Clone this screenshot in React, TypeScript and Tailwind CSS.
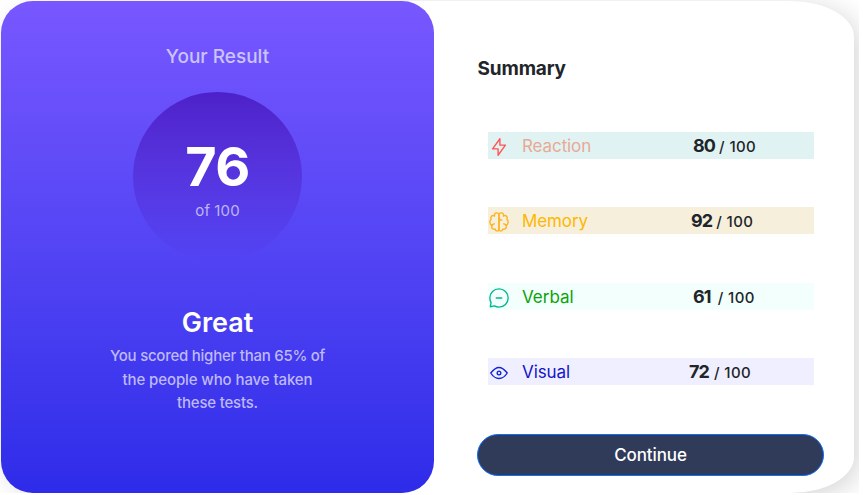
import React from 'react';

const stroke = {
  fill: 'none',
  strokeWidth: 1.25,
  strokeLinecap: 'round' as const,
  strokeLinejoin: 'round' as const,
};

const rows = [
  {
    label: 'Reaction',
    score: 80,
    bar: 'bg-[#e0f3f2] mb-[48px]',
    text: 'text-[#e9a995] tracking-[-0.1px]',
    inset: 'left-[205px]',
    gap: 'ml-[4px]',
    color: '#ff5555',
    paths: ['M10.833 8.333V2.5l-6.666 9.167h5V17.5l6.666-9.167h-5Z'],
  },
  {
    label: 'Memory',
    score: 92,
    bar: 'bg-[#f5efdc] mb-[49px]',
    text: 'text-[#ffb700] tracking-[-0.1px]',
    inset: 'left-[203px]',
    gap: 'ml-[4px]',
    color: '#ffb21e',
    paths: [
      'M5.833 11.667a2.5 2.5 0 1 0 .834 4.858',
      'M3.553 13.004a3.333 3.333 0 0 1-.728-5.53m.025-.067a2.083 2.083 0 0 1 2.983-2.824m.199.054A2.083 2.083 0 1 1 10 3.75v12.917a1.667 1.667 0 0 1-3.333 0M10 5.833a2.5 2.5 0 0 0 2.5 2.5m1.667 3.334a2.5 2.5 0 1 1-.834 4.858',
      'M16.447 13.004a3.333 3.333 0 0 0 .728-5.53m-.025-.067a2.083 2.083 0 0 0-2.983-2.824M10 3.75a2.083 2.083 0 1 1 3.967.887M10 3.75v12.917a1.667 1.667 0 0 0 3.333 0',
    ],
  },
  {
    label: 'Verbal',
    score: 61,
    bar: 'bg-[#f2fffd] mb-[48px]',
    text: 'text-[#0aa30a] tracking-[0px]',
    inset: 'left-[205px]',
    gap: 'ml-[7px]',
    color: '#00bb8f',
    paths: [
      'M7.5 10h5M10 18.333A8.333 8.333 0 1 0 1.667 10c0 1.518.406 2.942 1.115 4.167l-.699 3.75 3.75-.699A8.295 8.295 0 0 0 10 18.333Z',
    ],
  },
  {
    label: 'Visual',
    score: 72,
    bar: 'bg-[#f0efff] mb-[49px]',
    text: 'text-[#1414cc] tracking-[-0.1px]',
    inset: 'left-[201px]',
    gap: 'ml-[5px]',
    color: '#1125d6',
    paths: [
      'M10 11.667a1.667 1.667 0 1 0 0-3.334 1.667 1.667 0 0 0 0 3.334Z',
      'M17.5 10c-1.574 2.492-4.402 5-7.5 5s-5.926-2.508-7.5-5C4.416 7.632 6.66 5 10 5s5.584 2.632 7.5 5Z',
    ],
  },
];

export default function App() {
  return (
    <div className="h-[495px] w-[863px] overflow-hidden bg-white font-['Inter',sans-serif]">
      <div className="h-[493px] w-[859px] overflow-hidden pl-px pt-px">
        <main className="flex h-[491.5px] w-[853px] rounded-[64px/36px] bg-white shadow-[5px_5px_28px_rgba(0,0,0,0.17)]">
          <section className="flex w-[433px] shrink-0 flex-col items-center rounded-[32px] bg-linear-to-b from-[#7857ff] to-[#2e2be9] text-center">
            <h2 className="mt-[42px] h-[28px] text-[19px] leading-[28px] font-medium text-[#cac4fb]">Your Result</h2>
            <div className="mt-[21px] flex h-[169px] w-[169px] shrink-0 flex-col items-center rounded-full bg-linear-to-b from-[#4d21c9] to-[#2521c9]/0">
              <span className="mt-[45px] text-[54px] leading-[60px] font-bold tracking-[-0.5px] text-white">76</span>
              <span className="mt-[3px] text-[15px] leading-[22px] tracking-[0.1px] text-[#bdb5f5]">of 100</span>
            </div>
            <h3 className="mt-[44px] text-[27px] leading-[36px] font-semibold text-white">Great</h3>
            <p className="mt-[3px] text-[15px] leading-[23.5px] font-medium tracking-[-0.2px] text-[#beb9fa]">
              <span className="tracking-[-0.25px]">You scored higher than 65% of</span>
              <br />
              <span className="tracking-[-0.1px]">the people who have taken</span>
              <br />
              these tests.
            </p>
          </section>
          <section className="flex flex-1 flex-col pr-[29.5px] pl-[43.5px]">
            <h2 className="mt-[54px] mb-[49px] text-[19px] leading-[28px] font-bold tracking-[-0.15px] text-[#212529]">
              Summary
            </h2>
            <div className="mr-[10.5px] ml-[10.5px]">
              {rows.map((r) => (
                <div key={r.label} className={`relative flex h-[27px] items-center ${r.bar}`}>
                  <svg width="22" height="22" viewBox="0 0 20 20" className="mt-[3px]" stroke={r.color} {...stroke}>
                    {r.paths.map((d) => (
                      <path key={d} d={d} />
                    ))}
                  </svg>
                  <span className={`ml-[12px] pt-[3px] text-[17px] ${r.text}`}>{r.label}</span>
                  <div className={`absolute top-0 flex items-baseline whitespace-pre text-[#212529] ${r.inset}`}>
                    <span className="text-[18px] leading-[27px] font-bold tracking-[-0.9px]">{r.score}</span>
                    <span className={`text-[15px] font-medium tracking-[0.4px] ${r.gap}`}>/ 100</span>
                  </div>
                </div>
              ))}
            </div>
            <button className="-ml-[0.5px] h-[42px] w-[347px] rounded-full border border-[#0d6efd] bg-[#303b59] pt-px text-[17px] font-medium tracking-[-0.1px] text-white">
              Continue
            </button>
          </section>
        </main>
      </div>
    </div>
  );
}
